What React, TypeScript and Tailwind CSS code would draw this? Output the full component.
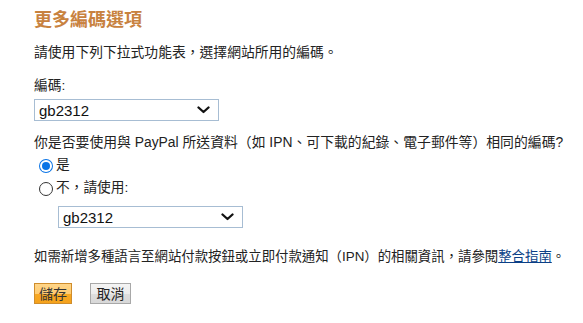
import React from "react";

const font = { fontFamily: '"Liberation Sans", "Noto Sans CJK TC", sans-serif' };

function Chevron() {
  return (
    <svg width="13" height="8" viewBox="0 0 13 8" className="shrink-0">
      <path d="M1.5 1.5 L6.5 6 L11.5 1.5" fill="none" stroke="#111" strokeWidth="2.3" strokeLinecap="round" strokeLinejoin="round" />
    </svg>
  );
}

function Select() {
  return (
    <div className="w-[185px] h-[22px] border border-[#a7bdd3] bg-white flex items-center justify-between pl-[4px] pr-[8px]">
      <span className="text-[15px] leading-none text-[#111]">gb2312</span>
      <Chevron />
    </div>
  );
}

function Radio({ checked }: { checked?: boolean }) {
  return checked ? (
    <span className="w-[14px] h-[14px] rounded-full bg-[#0a74e6] flex items-center justify-center shrink-0">
      <span className="w-[12px] h-[12px] rounded-full bg-white flex items-center justify-center">
        <span className="w-[8px] h-[8px] rounded-full bg-[#0a74e6]" />
      </span>
    </span>
  ) : (
    <span className="w-[14px] h-[14px] rounded-full border border-[#333] bg-white shrink-0" />
  );
}

export default function App() {
  return (
    <div className="w-[583px] h-[323px] bg-white pl-[34px] pt-[8px] text-[#222]" style={font}>
      <div className="flex flex-col">
        <h1 className="text-[18px] leading-[24px] font-bold text-[#c8823f]">更多編碼選項</h1>
        <p className="mt-[11px] text-[13.8px] leading-[20px]">請使用下列下拉式功能表，選擇網站所用的編碼。</p>
        <div className="mt-[14px] text-[13.7px] leading-[18px]">編碼:</div>
        <div className="mt-[4px]">
          <Select />
        </div>
        <p className="mt-[12px] text-[13.85px] leading-[18px]">
          你是否要使用與 PayPal 所送資料（如 IPN、可下載的紀錄、電子郵件等）相同的編碼?
        </p>
        <div className="mt-[3px] flex flex-col">
          <label className="h-[23px] flex items-center gap-[3px] pl-[5px] text-[13.7px]">
            <Radio checked />
            <span>是</span>
          </label>
          <label className="h-[23px] flex items-center gap-[3px] pl-[5px] text-[13.7px]">
            <Radio />
            <span>不，請使用:</span>
          </label>
        </div>
        <div className="mt-[6px] ml-[24px]">
          <Select />
        </div>
        <p className="mt-[20px] text-[13.4px] leading-[18px]">
          如需新增多種語言至網站付款按鈕或立即付款通知（IPN）的相關資訊，請參閱
          <a className="text-[#0b3f86] underline">整合指南</a>。
        </p>
        <div className="mt-[17px] flex gap-[18px]">
          <button className="w-[38px] h-[21px] border border-[#cf8d2c] bg-[linear-gradient(#ffd588_0%,#ffcc72_50%,#f8a823_50%,#f5a21c_100%)] text-[14px] leading-none text-[#333]">
            儲存
          </button>
          <button className="w-[41px] h-[21px] border border-[#a8a8a8] bg-[linear-gradient(#f4f4f4_0%,#ececec_50%,#dedede_50%,#d8d8d8_100%)] text-[14px] leading-none text-[#222]">
            取消
          </button>
        </div>
      </div>
    </div>
  );
}
